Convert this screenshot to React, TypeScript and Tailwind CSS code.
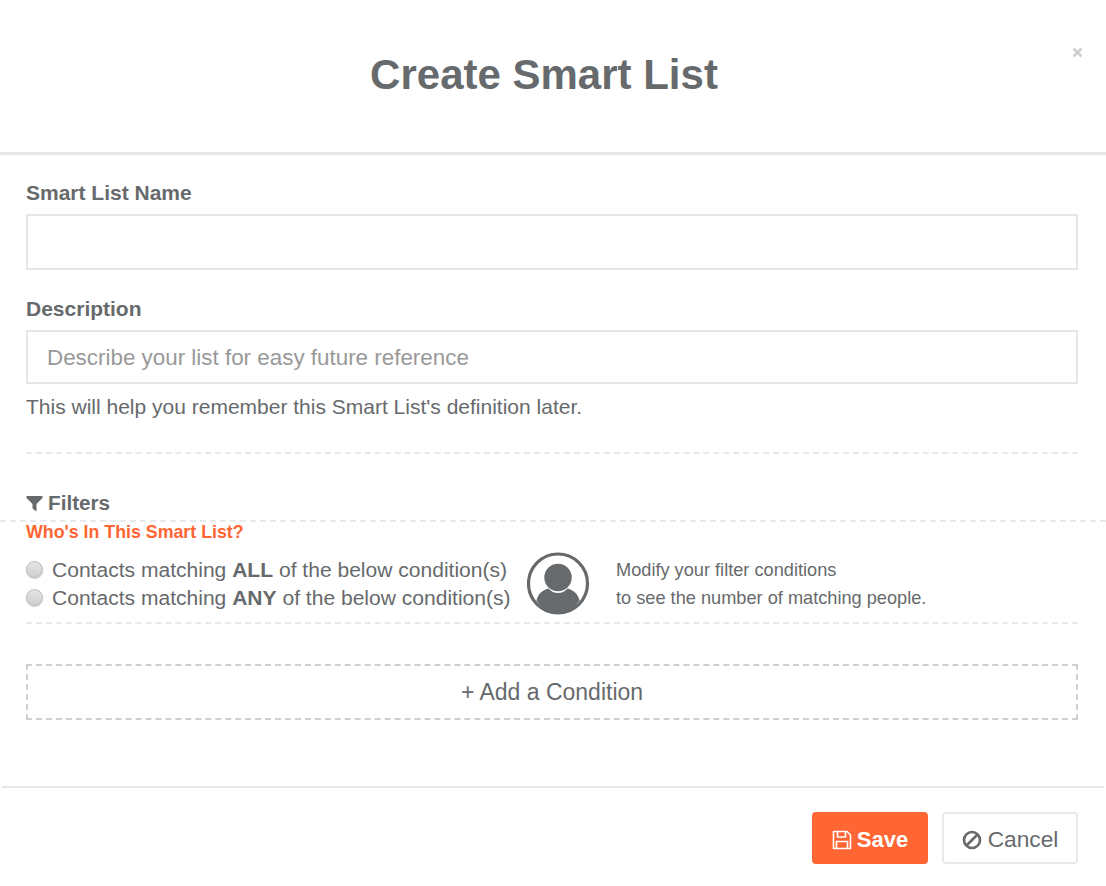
import React from "react";

function Radio() {
  return (
    <span className="block w-[17px] h-[17px] shrink-0 -translate-y-[1px] rounded-full border border-[#b9b9b9] bg-[linear-gradient(#e4e4e4,#cfcfcf)] shadow-[0_1px_1px_rgba(0,0,0,0.2)]" />
  );
}

function FloppyIcon() {
  return (
    <svg width="20" height="20" viewBox="0 0 20 20" fill="none" stroke="white" strokeWidth="1.6" className="shrink-0">
      <path d="M1.5 1.5H15L18.5 5V18.5H1.5Z" strokeLinejoin="round" />
      <path d="M5.5 1.5V7H13.5V1.5" />
      <path d="M4.5 18.5V11.5H15.5V18.5" />
    </svg>
  );
}

function BanIcon() {
  return (
    <svg width="20" height="20" viewBox="0 0 20 20" fill="none" stroke="#676a6c" strokeWidth="2.6" className="shrink-0">
      <circle cx="10" cy="10" r="8" />
      <path d="M4.5 15.5L15.5 4.5" />
    </svg>
  );
}

function FilterIcon() {
  return (
    <svg width="17" height="17" viewBox="0 0 17 17" fill="#676a6c" className="shrink-0">
      <path d="M0.5 1H16.5V3L10.5 9V16.5L6.5 13.5V9L0.5 3Z" />
    </svg>
  );
}

function PersonIcon() {
  return (
    <svg width="63" height="63" viewBox="0 0 63 63" className="shrink-0 mb-[2px]">
      <circle cx="31" cy="31.5" r="29.5" fill="none" stroke="#676a6c" strokeWidth="3.2" />
      <circle cx="31" cy="25.5" r="13.7" fill="#676a6c" />
      <path d="M9.5 48.5C11 42 15 38.5 21.5 36.5C24 39.5 27.5 41 31 41C34.5 41 38 39.5 40.5 36.5C47 38.5 51 42 52.5 48.5C47.5 56.5 40 61 31 61C22 61 14.5 56.5 9.5 48.5Z" fill="#676a6c" />
    </svg>
  );
}

export default function App() {
  return (
    <div className="w-[1106px] h-[886px] overflow-hidden bg-white text-[#676a6c] font-['Liberation_Sans',Arial,sans-serif] relative">
      <header className="h-[155px] border-b-[3px] border-[#e7e7e7] flex items-start justify-center pt-[49px] pr-[18px] relative">
        <h1 className="text-[42px] leading-[52px] font-bold text-[#676a6c]">Create Smart List</h1>
        <span className="absolute left-[1072px] top-[47px] w-[11px] h-[11px]">
          <svg width="11" height="11" viewBox="0 0 11 11" stroke="#cfcfcf" strokeWidth="2.6">
            <path d="M1.5 1.5L9.5 9.5M9.5 1.5L1.5 9.5" />
          </svg>
        </span>
      </header>

      <div className="px-[26px] pr-[28px]">
        <label className="block mt-[26px] text-[21px] leading-[24px] font-bold">Smart List Name</label>
        <input className="block mt-[9px] w-full h-[56px] border-2 border-[#e5e6e7] px-[19px] outline-none bg-white" />

        <label className="block mt-[27px] text-[21px] leading-[24px] font-bold">Description</label>
        <input
          className="block mt-[9px] w-full h-[54px] border-2 border-[#e5e6e7] px-[19px] pt-[1px] text-[22.4px] outline-none bg-white placeholder:text-[#999999]"
          placeholder="Describe your list for easy future reference"
        />
        <p className="mt-[11px] text-[21px] leading-[24px]">This will help you remember this Smart List's definition later.</p>

        <div className="mt-[33px] border-t-2 border-dashed border-[#e7eaec]" />

        <div className="mt-[37px] flex items-center gap-[5px] text-[20.7px] leading-[24px] font-bold">
          <FilterIcon />
          <span>Filters</span>
        </div>
      </div>

      <div className="mt-[5px] border-t-2 border-dashed border-[#e7eaec]" />

      <div className="px-[26px] pr-[28px]">
        <p className="text-[17.8px] leading-[20px] font-bold text-[#ff6633]">Who's In This Smart List?</p>

        <div className="mt-[10px] flex items-center h-[64px]">
          <div className="w-[501px] flex flex-col gap-[4px] text-[21.05px] leading-[24px]">
            <div className="flex items-center gap-[9px]">
              <Radio />
              <span>Contacts matching <b>ALL</b> of the below condition(s)</span>
            </div>
            <div className="flex items-center gap-[9px]">
              <Radio />
              <span>Contacts matching <b>ANY</b> of the below condition(s)</span>
            </div>
          </div>
          <PersonIcon />
          <div className="ml-[26px] text-[18.2px] leading-[28px]">
            <p>Modify your filter conditions</p>
            <p>to see the number of matching people.</p>
          </div>
        </div>

        <div className="mt-[6px] border-t-2 border-dashed border-[#e7eaec]" />

        <button className="mt-[40px] w-full h-[56px] border-2 border-dashed border-[#cfcfcf] text-[23px] text-[#676a6c] flex items-center justify-center">
          + Add a Condition
        </button>
      </div>

      <div className="mt-[66px] mx-[2px] border-t-2 border-[#e7e7e7]" />

      <footer className="mt-[24px] pr-[28px] flex justify-end gap-[14px]">
        <button className="w-[116px] h-[52px] pt-[3px] rounded-[4px] bg-[#ff6633] text-white text-[22px] font-bold flex items-center justify-center gap-[5px]">
          <FloppyIcon />
          Save
        </button>
        <button className="w-[136px] h-[52px] pt-[3px] rounded-[4px] border-2 border-[#e7eaec] bg-white text-[22.7px] text-[#676a6c] flex items-center justify-center gap-[6px]">
          <BanIcon />
          Cancel
        </button>
      </footer>
    </div>
  );
}
